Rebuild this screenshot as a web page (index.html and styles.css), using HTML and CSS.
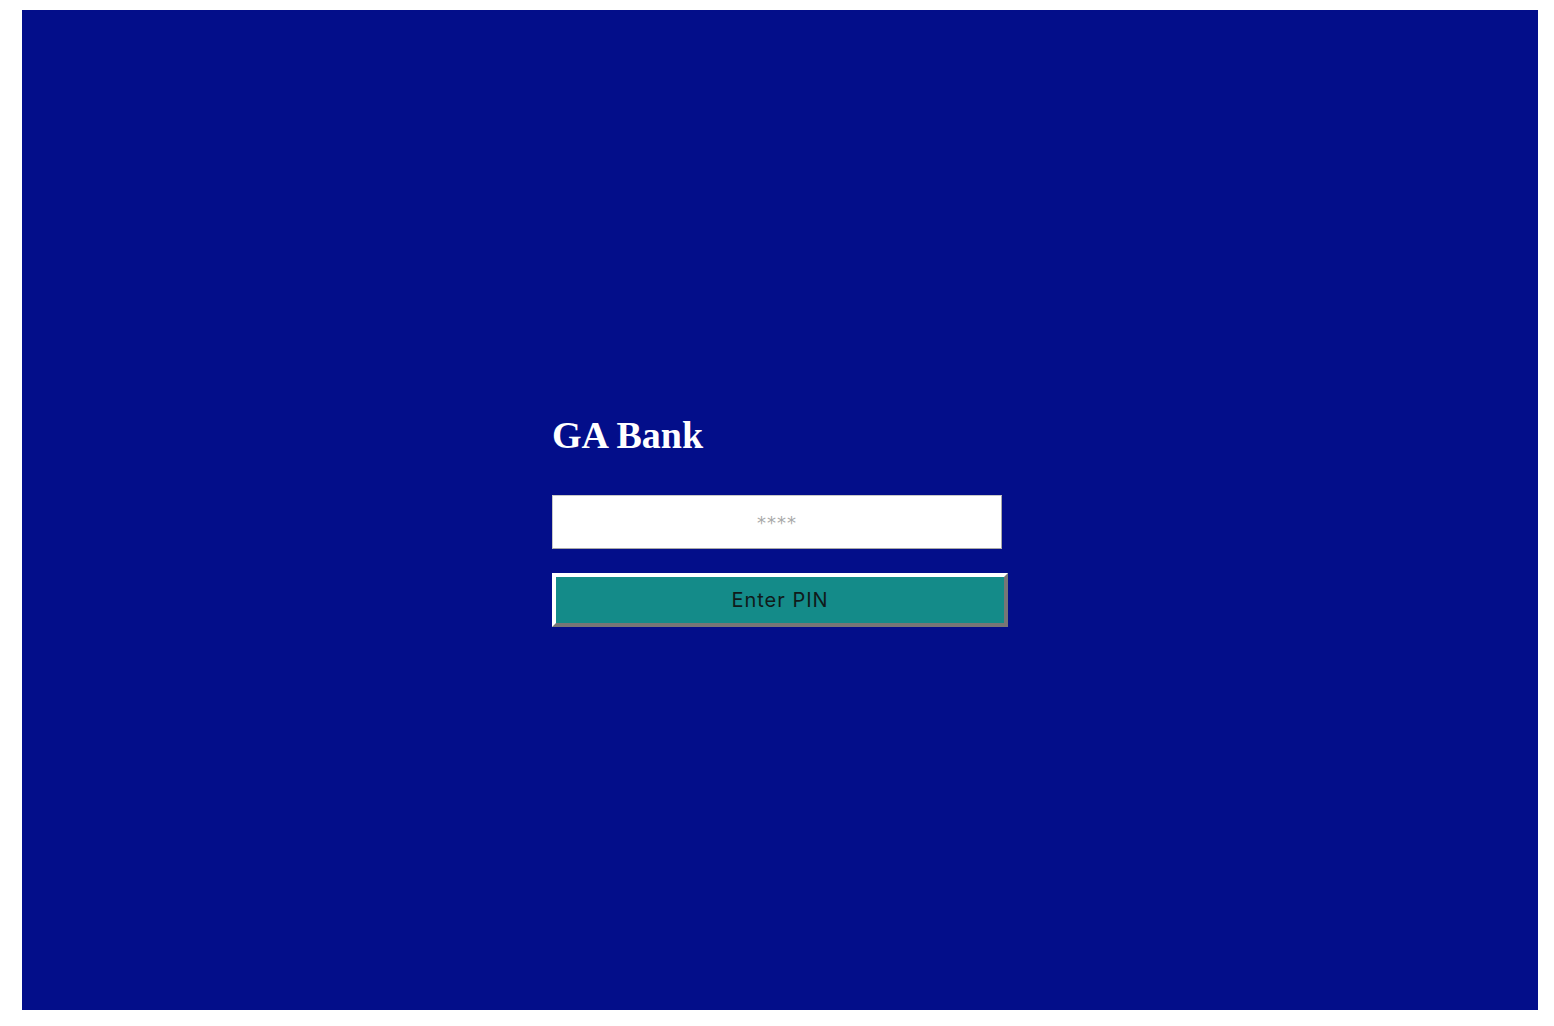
FILE: index.html
```html
<!DOCTYPE html>
<html lang="en">
<head>
<meta charset="utf-8">
<title>GA Bank</title>
<link rel="stylesheet" href="styles.css">
</head>
<body>
<main class="screen">
  <form class="login">
    <h1 class="brand">GA Bank</h1>
    <input class="pin" type="password" placeholder="****">
    <button class="submit" type="button">Enter PIN</button>
  </form>
</main>
</body>
</html>
```

FILE: styles.css
```css
html, body {
  margin: 0;
  padding: 0;
  background: #ffffff;
}
body {
  padding: 10px 16px 16px 22px;
}
.screen {
  width: 1516px;
  height: 1000px;
  box-sizing: border-box;
  padding-top: 20px;
  background: #030e8a;
  display: flex;
  justify-content: center;
  align-items: center;
}
.login {
  width: 456px;
  display: flex;
  flex-direction: column;
  align-items: flex-start;
}
.brand {
  margin: 0 0 38px 0;
  font-family: "Liberation Serif", "Times New Roman", serif;
  font-weight: bold;
  font-size: 38px;
  line-height: 44px;
  color: #ffffff;
}
.pin {
  box-sizing: border-box;
  width: 450px;
  height: 54px;
  margin: 0 0 24px 0;
  padding: 0;
  border: 1px solid #a8a8a8;
  border-top-color: #c8c8c8;
  border-left-color: #c8c8c8;
  background: #ffffff;
  text-align: center;
  font-family: "DejaVu Sans", "Liberation Sans", sans-serif;
  font-size: 18px;
  letter-spacing: 1px;
  outline: none;
}
.pin::placeholder {
  color: #a9a9a9;
}
.submit {
  box-sizing: border-box;
  width: 456px;
  height: 54px;
  margin: 0;
  padding: 0;
  border-width: 4px;
  border-style: solid;
  border-color: #ffffff #767676 #767676 #ffffff;
  background: #148b89;
  color: #101a1a;
  font-family: Inter, "Liberation Sans", sans-serif;
  font-size: 20px;
  letter-spacing: 1px;
}
```
